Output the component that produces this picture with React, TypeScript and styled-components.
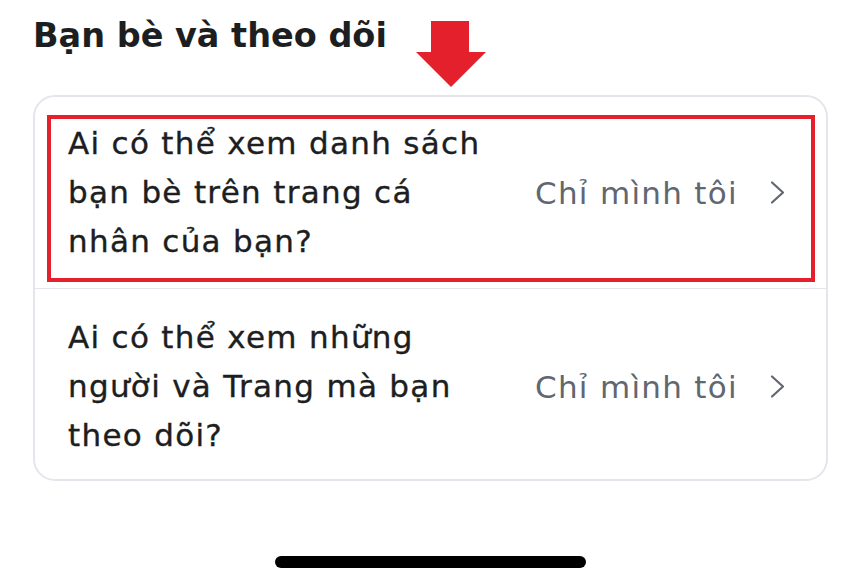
import React from "react";
import styled, { createGlobalStyle } from "styled-components";

const GlobalStyle = createGlobalStyle`
  html, body {
    margin: 0;
    padding: 0;
    background: #ffffff;
  }
  body {
    font-family: "DejaVu Sans", "Noto Sans", sans-serif;
    color: #1c1e21;
  }
`;

const Page = styled.div`
  position: relative;
  width: 861px;
  height: 583px;
  padding: 0 33px;
  box-sizing: border-box;
  overflow: hidden;
`;

const Title = styled.h1`
  margin: 0;
  padding-top: 13px;
  font-size: 33.5px;
  line-height: 46px;
  font-weight: 700;
  color: #1c1e21;
`;

// red annotation arrow drawn over the page
const Arrow = styled.svg`
  position: absolute;
  left: 416px;
  top: 21px;
`;

const Card = styled.div`
  margin-top: 36px;
  border: 2px solid #e4e6eb;
  border-radius: 22px;
  overflow: hidden;
`;

const Row = styled.div<{ highlighted?: boolean; divided?: boolean }>`
  position: relative;
  display: flex;
  align-items: center;
  min-height: 191px;
  padding: 0 41px 0 33px;
  box-sizing: border-box;
  ${(p) => p.divided && `border-top: 1px solid #e4e6eb; padding-top: 5px;`}
  ${(p) =>
    p.highlighted &&
    `
    &::after {
      content: "";
      position: absolute;
      top: 18px;
      left: 12px;
      right: 11px;
      bottom: 6px;
      border: 4px solid #e3202b;
      pointer-events: none;
    }
  `}
`;

const Label = styled.div`
  width: 425px;
  font-size: 31px;
  line-height: 49px;
  letter-spacing: 1.3px;
  color: #1c1e21;
  -webkit-text-stroke: 0.35px #1c1e21;
`;

const Value = styled.div`
  margin-left: auto;
  display: flex;
  align-items: center;
  gap: 32px;
  font-size: 31px;
  letter-spacing: 1.3px;
  color: #606770;
`;

const Chevron = () => (
  <svg width="15" height="25" viewBox="0 0 15 25" fill="none">
    <path d="M2 2.5L13 12.5L2 22.5" stroke="#606770" strokeWidth="2.2" strokeLinecap="round" strokeLinejoin="round" />
  </svg>
);

const HomeIndicator = styled.div`
  width: 311px;
  height: 12px;
  border-radius: 6px;
  background: #000;
  margin: 75px auto 0;
`;

const rows = [
  { label: "Ai có thể xem danh sách bạn bè trên trang cá nhân của bạn?", value: "Chỉ mình tôi" },
  { label: "Ai có thể xem những người và Trang mà bạn theo dõi?", value: "Chỉ mình tôi" },
];

export default function App() {
  return (
    <>
      <GlobalStyle />
      <Page>
        <Title>Bạn bè và theo dõi</Title>
        <Arrow width="70" height="66" viewBox="0 0 70 66">
          <path d="M15 0H53V31H70L35 66L0 31H15Z" fill="#e3202b" />
        </Arrow>
        <Card>
          {rows.map((r, i) => (
            <Row key={i} highlighted={i === 0} divided={i > 0}>
              <Label>{r.label}</Label>
              <Value>
                {r.value}
                <Chevron />
              </Value>
            </Row>
          ))}
        </Card>
        <HomeIndicator />
      </Page>
    </>
  );
}
